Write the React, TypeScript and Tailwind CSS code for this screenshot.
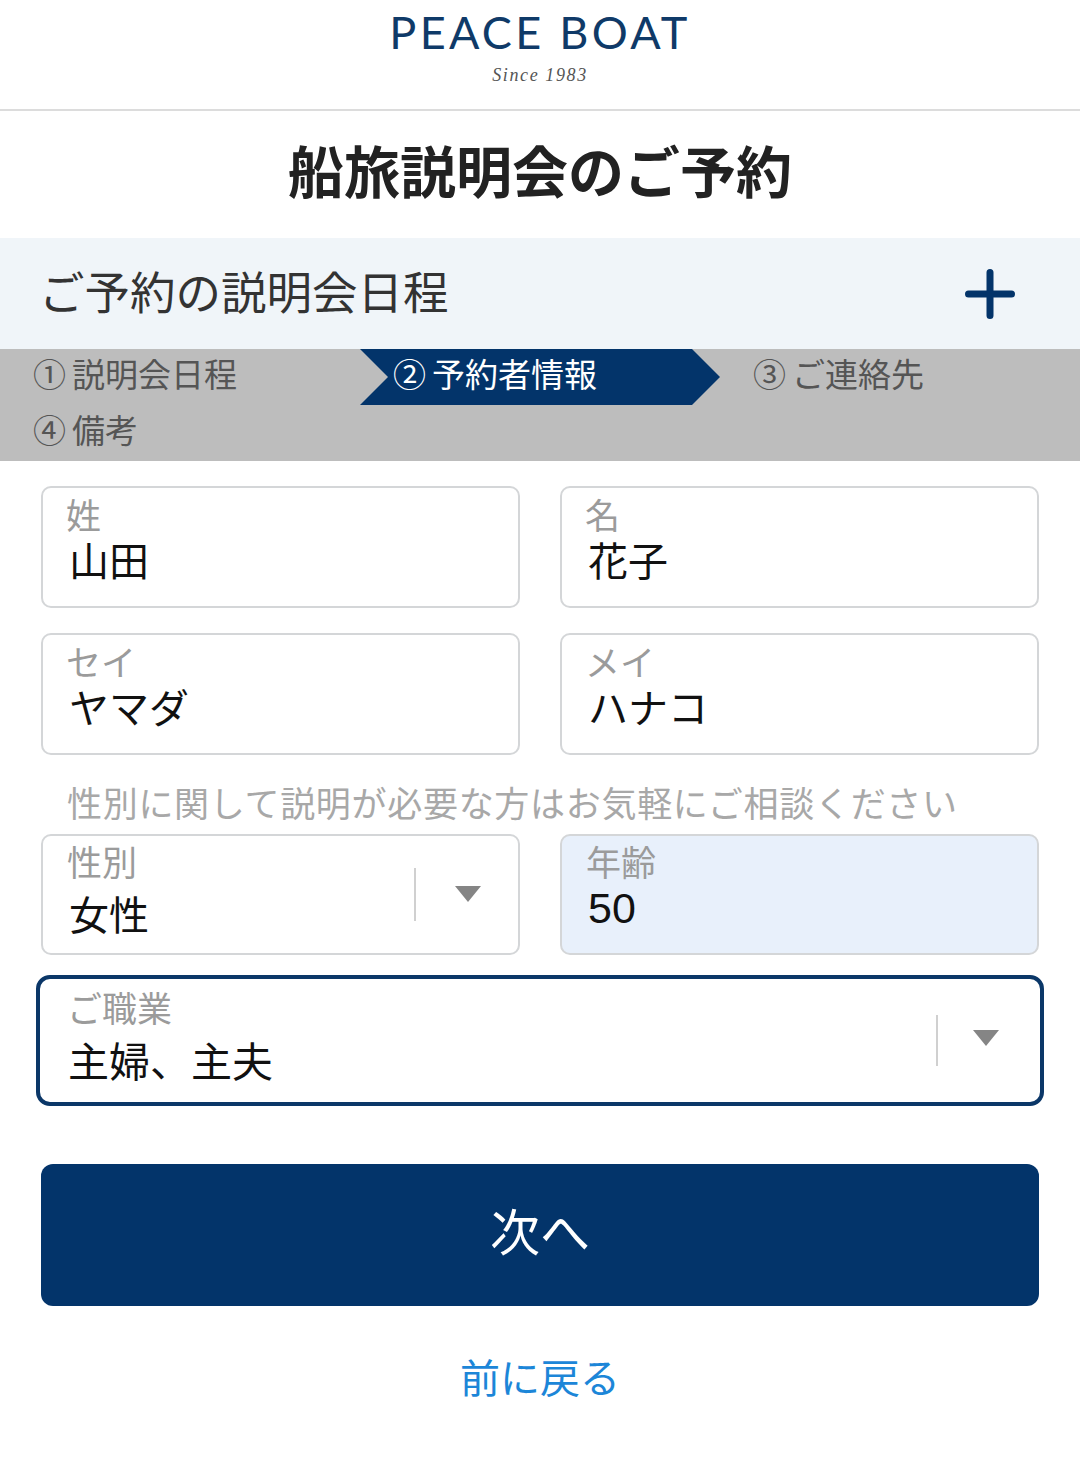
const font = { fontFamily: '"Noto Sans CJK JP", sans-serif' };

function Field({ label, children }: { label: string; children: React.ReactNode }) {
  return (
    <div className="h-[122px] rounded-[10px] border-2 border-[#d4d6d8] bg-white pt-[6px] pl-[23px]">
      <div className="h-[40px] text-[35px] leading-[40px] text-[#9b9b9b]">{label}</div>
      <div className="h-[50px] pl-[3px] text-[40px] leading-[50px] text-[#111]">{children}</div>
    </div>
  );
}

function Caret() {
  return (
    <svg width="28" height="18" viewBox="0 0 28 18">
      <path d="M1 1h26L14 17z" fill="#858585" />
    </svg>
  );
}

function Step({ n, children }: { n: string; children: React.ReactNode }) {
  return (
    <div className="flex h-[56px] w-[360px] items-center gap-[6px] pb-[6px] pl-[33px] text-[33px] text-[#555]">
      <span>{n}</span>
      <span>{children}</span>
    </div>
  );
}

export default function App() {
  return (
    <div className="h-[1464px] w-[1080px] overflow-hidden bg-white" style={font}>
      <header className="flex h-[111px] flex-col items-center border-b-2 border-[#dcdcdc]">
        <div className="mt-[4px] text-[45px] leading-[56px] tracking-[3.3px] text-[#0f3a68]" style={{ fontFamily: "Lato, sans-serif" }}>
          PEACE BOAT
        </div>
        <div className="mt-[3px] text-[18px] italic leading-[24px] tracking-[1.6px] text-[#555]" style={{ fontFamily: '"Liberation Serif", serif' }}>
          Since 1983
        </div>
      </header>

      <h1 className="flex h-[127px] items-center justify-center pb-[12px] text-[56px] font-bold text-[#222]">船旅説明会のご予約</h1>

      <div className="flex h-[111px] items-center justify-between bg-[#f0f5f9] pl-[39px] pr-[65px]">
        <span className="pb-[7px] text-[45.5px] text-[#333]">ご予約の説明会日程</span>
        <svg width="50" height="50" viewBox="0 0 50 50" fill="none" stroke="#03346a" strokeWidth="7" strokeLinecap="round">
          <path d="M25 3.5v43M3.5 25h43" />
        </svg>
      </div>

      <div className="flex h-[112px] flex-wrap content-start bg-[#bdbdbd]">
        <Step n="①">説明会日程</Step>
        <div className="flex h-[56px] w-[360px] items-center gap-[6px] bg-[#03346a] pb-[6px] pl-[33px] text-[33px] text-white [clip-path:polygon(0_0,332px_0,100%_50%,332px_100%,0_100%,28px_50%)]">
          <span>②</span>
          <span>予約者情報</span>
        </div>
        <Step n="③">ご連絡先</Step>
        <Step n="④">備考</Step>
      </div>

      <main className="px-[41px] pt-[25px]">
        <div className="grid grid-cols-2 gap-x-[40px] gap-y-[25px]">
          <Field label="姓">山田</Field>
          <Field label="名">花子</Field>
          <Field label="セイ">ヤマダ</Field>
          <Field label="メイ">ハナコ</Field>
        </div>

        <p className="flex h-[79px] items-center whitespace-nowrap pl-[26px] pt-[16px] text-[35px] tracking-[0.7px] text-[#a8a8a8]">
          性別に関して説明が必要な方はお気軽にご相談ください
        </p>

        <div className="grid h-[121px] grid-cols-2 gap-x-[40px]">
          <div className="flex rounded-[10px] border-2 border-[#d4d6d8] bg-white pt-[5px] pl-[24px]">
            <div className="flex-1">
              <div className="h-[40px] text-[35px] leading-[40px] text-[#9b9b9b]">性別</div>
              <div className="mt-[7px] h-[50px] pl-[2px] text-[40px] leading-[50px] text-[#111]">女性</div>
            </div>
            <div className="mb-[32px] mt-[27px] w-[2px] bg-[#d0d0d0]" />
            <div className="flex w-[102px] items-center justify-center pb-[6px] pl-[2px]">
              <Caret />
            </div>
          </div>
          <div className="rounded-[10px] border-2 border-[#d4d6d8] bg-[#e8f0fb] pt-[5px] pl-[24px]">
            <div className="h-[40px] text-[35px] leading-[40px] text-[#9b9b9b]">年齢</div>
            <div className="mt-[2px] h-[50px] pl-[2px] text-[43px] leading-[50px] text-[#111]" style={{ fontFamily: '"Liberation Sans", sans-serif' }}>
              50
            </div>
          </div>
        </div>

        <div className="-mx-[5px] mt-[20px] flex h-[131px] rounded-[14px] border-[4px] border-[#0b3768] bg-white pt-[8px] pl-[27px]">
          <div className="flex-1">
            <div className="h-[40px] text-[35px] leading-[40px] text-[#9b9b9b]">ご職業</div>
            <div className="mt-[7px] h-[50px] pl-[1px] text-[41px] leading-[50px] text-[#111]">主婦、主夫</div>
          </div>
          <div className="mb-[36px] mt-[28px] w-[2px] bg-[#d0d0d0]" />
          <div className="flex w-[102px] items-center justify-center pb-[13px] pr-[6px]">
            <Caret />
          </div>
        </div>

        <button className="mt-[58px] flex h-[142px] w-full items-center justify-center rounded-[12px] bg-[#03346a] pb-[12px] text-[50px] text-white">
          次へ
        </button>

        <div className="mt-[42px] text-center text-[40px] leading-[56px] text-[#1c86d8]">前に戻る</div>
      </main>
    </div>
  );
}
